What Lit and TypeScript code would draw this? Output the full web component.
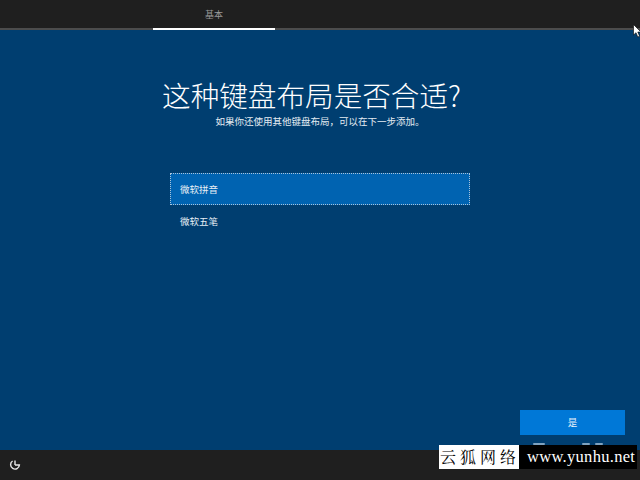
import { LitElement, html, css } from 'lit';
import { customElement } from 'lit/decorators.js';

const SUBTITLE = '如果你还使用其他键盘布局\uFF0C可以在下一步添加。';

@customElement('app-root')
export class AppRoot extends LitElement {
  static styles = css`
    :host {
      display: flex;
      flex-direction: column;
      width: 640px;
      height: 480px;
      position: relative;
      overflow: hidden;
      background: #003e70;
      color: #fff;
      font-family: "Noto Sans CJK SC", "Noto Sans", sans-serif;
    }

    .top {
      height: 28px;
      flex: none;
      background: #1f1f1f;
      border-bottom: 2px solid #4c4c4c;
      padding-left: 153px;
      display: flex;
    }
    .tab {
      width: 122px;
      height: 30px;
      box-sizing: border-box;
      border-bottom: 2px solid #fff;
      text-align: center;
      font-size: 9px;
      line-height: 30px;
      color: #9a9a9a;
    }

    .main {
      flex: 1;
      display: flex;
      flex-direction: column;
      align-items: center;
      padding-top: 45px;
    }
    h1 {
      margin: 0;
      padding-right: 17px;
      font-size: 28.6px;
      line-height: 40px;
      font-weight: 300;
      white-space: nowrap;
    }
    .sub {
      margin-top: -1px;
      font-size: 9.5px;
      line-height: 14px;
      color: #e4ecf2;
    }

    .list {
      width: 300px;
      margin-top: 45px;
      display: flex;
      flex-direction: column;
      font-size: 9.5px;
    }
    .item {
      height: 32px;
      line-height: 32px;
      padding-left: 10px;
      box-sizing: border-box;
      color: #e6eef5;
    }
    .item.sel {
      background: #0063b1;
      outline: 1px dotted #a9c3da;
      outline-offset: -1px;
    }

    .actions {
      margin-top: auto;
      align-self: flex-end;
      padding: 0 15px 15px 0;
    }
    .btn {
      width: 105px;
      height: 25px;
      line-height: 25px;
      background: #0078d7;
      color: #e6f0fa;
      text-align: center;
      font-size: 9.5px;
    }

    .bottom {
      height: 30px;
      flex: none;
      background: #1f1f1f;
      display: flex;
      align-items: center;
      padding-left: 9px;
    }
    .bottom svg { display: block; }

    .cursor {
      position: absolute;
      left: 633px;
      top: 24px;
    }

    .mark {
      position: absolute;
      left: 439px;
      top: 445px;
      width: 198px;
      height: 24px;
      display: flex;
      line-height: 24px;
    }
    .mark .cn {
      width: 80px;
      background: #fff;
      color: #000;
      font-family: "Noto Serif CJK SC", "Noto Sans CJK SC", serif;
      font-size: 16px;
      letter-spacing: 4px;
      padding-left: 1px;
      box-sizing: border-box;
      white-space: nowrap;
      overflow: hidden;
    }
    .mark .en {
      flex: 1;
      background: #000;
      color: #fff;
      font-family: "Liberation Serif", serif;
      font-size: 16.5px;
      letter-spacing: 0.3px;
      padding-left: 8px;
      white-space: nowrap;
    }

    /* tips of the text hidden behind the watermark */
    .tip {
      position: absolute;
      top: 443px;
      height: 2px;
      border-radius: 1px;
      background: #7fa3c0;
    }
  `;

  render() {
    return html`
      <div class="top"><div class="tab">基本</div></div>
      <div class="main">
        <h1>这种键盘布局是否合适?</h1>
        <div class="sub">${SUBTITLE}</div>
        <div class="list">
          <div class="item sel">微软拼音</div>
          <div class="item">微软五笔</div>
        </div>
        <div class="actions"><div class="btn">是</div></div>
      </div>
      <div class="bottom">
        <svg width="12" height="12" viewBox="0 0 12 12" fill="none" stroke="#e8e8e8" stroke-width="1.4">
          <path d="M3.6 2A4.4 4.4 0 1 0 10.4 6H6" />
          <path d="M6 6V1.6" />
        </svg>
      </div>
      <svg class="cursor" width="9" height="14" viewBox="0 0 9 14">
        <path d="M.5.5V11L3 8.7 4.8 13 6.6 12.2 4.8 8H8Z" fill="#fff" stroke="#000" stroke-width=".6" />
      </svg>
      ${[[533, 12], [582, 8], [595, 8]].map(
        ([x, w]) => html`<div class="tip" style="left:${x}px;width:${w}px"></div>`
      )}
      <div class="mark">
        <div class="cn">云狐网络</div>
        <div class="en">www.yunhu.net</div>
      </div>
    `;
  }
}
